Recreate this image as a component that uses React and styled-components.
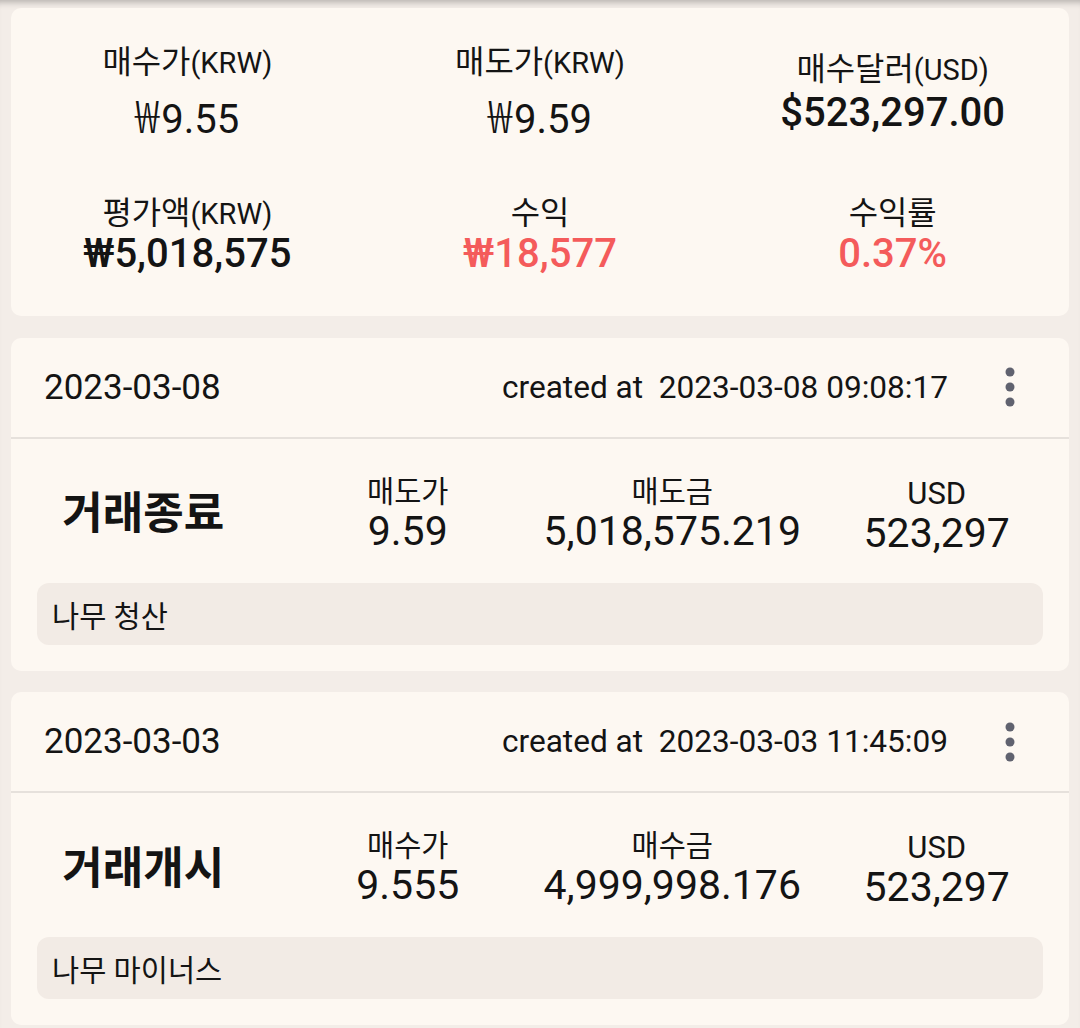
import React from "react";
import styled, { createGlobalStyle } from "styled-components";

const colors = {
    page: "#f3ede8",
    card: "#fdf8f2",
    note: "#f2ebe5",
    line: "#e6e1dc",
    text: "#141414",
    red: "#f45b5b",
    dots: "#60626f",
};

const GlobalStyle = createGlobalStyle`
    html, body {
        margin: 0;
        padding: 0;
        background: ${colors.page};
    }
    body {
        font-family: Roboto, "Noto Sans CJK KR", "Noto Sans", sans-serif;
        color: ${colors.text};
    }
`;

const Page = styled.div`
    width: 1080px;
    min-height: 1028px;
    box-sizing: border-box;
    padding: 8px 11px;
    background: ${colors.page};
    box-shadow: inset 0 8px 7px -6px rgba(0, 0, 0, 0.28);
    display: flex;
    flex-direction: column;
    gap: 21.5px;
`;

const Card = styled.div`
    background: ${colors.card};
    border-radius: 10px;
    overflow: hidden;
`;

/* hangul is drawn a bit larger than latin in the app */
const Ko = styled.span`
    font-size: 1.1em;
`;

const Won = styled.span`
    font-family: "Noto Sans CJK KR", sans-serif;
    font-weight: 300;
    font-size: 1.12em;
    line-height: 1;
    margin-right: 2px;
`;

const SummaryGrid = styled(Card)`
    height: 308px;
    box-sizing: border-box;
    display: grid;
    grid-template-columns: repeat(3, 1fr);
    grid-template-rows: 96px 84px;
    row-gap: 52px;
    padding-top: 36px;
    align-items: center;
`;

const SummaryCell = styled.div`
    display: flex;
    flex-direction: column;
    align-items: center;
    gap: ${(p) => p.$gap}px;
`;

const SummaryLabel = styled.div`
    font-size: 29px;
    line-height: 34px;
    margin-top: 4px;
    white-space: nowrap;
`;

const SummaryValue = styled.div`
    font-size: 40px;
    line-height: 46px;
    font-weight: ${(p) => (p.$strong ? 500 : 400)};
    color: ${(p) => (p.$red ? colors.red : colors.text)};
    white-space: nowrap;
`;

const TradeHeader = styled.div`
    height: 99px;
    display: flex;
    align-items: center;
    padding-left: 33px;
    border-bottom: 2px solid ${colors.line};
`;

const TradeDate = styled.div`
    font-size: 35px;
    flex: 1;
`;

const CreatedAt = styled.div`
    font-size: 31.6px;
    white-space: pre;
`;

const MoreButton = styled.button`
    width: 40px;
    height: 48px;
    margin: 0 39px 0 42px;
    padding: 0;
    border: none;
    background: transparent;
    display: flex;
    align-items: center;
    justify-content: center;
`;

const TradeBody = styled.div`
    display: grid;
    grid-template-columns: repeat(4, 1fr);
    align-items: center;
    padding: 38px 0 31px;
`;

const TradeKind = styled.div`
    text-align: center;
    font-size: 44px;
    font-weight: 700;
    line-height: 44px;
`;

const TradeCell = styled.div`
    display: flex;
    flex-direction: column;
    align-items: center;
    gap: 3px;
    transform: translateY(${(p) => (p.$shift ? 2 : 0)}px);
`;

const TradeLabel = styled.div`
    font-size: ${(p) => (p.$latin ? 31 : 29.5)}px;
    line-height: 30px;
`;

const TradeValue = styled.div`
    font-size: 41px;
    line-height: 42px;
    white-space: nowrap;
`;

const Note = styled.div`
    margin: 0 26px 26px;
    height: 62px;
    border-radius: 12px;
    background: ${colors.note};
    display: flex;
    align-items: center;
    padding-left: 15px;
    font-size: 29.5px;
`;

const summary = [
    { ko: "매수가", unit: "(KRW)", won: true, value: "9.55", gap: 12 },
    { ko: "매도가", unit: "(KRW)", won: true, value: "9.59", gap: 12 },
    { ko: "매수달러", unit: "(USD)", value: "$523,297.00", gap: 3, strong: true },
    { ko: "평가액", unit: "(KRW)", value: "₩5,018,575", gap: 0, strong: true },
    { ko: "수익", unit: "", value: "₩18,577", gap: 0, strong: true, red: true },
    { ko: "수익률", unit: "", value: "0.37%", gap: 0, strong: true, red: true },
];

const trades = [
    {
        date: "2023-03-08",
        created: "2023-03-08 09:08:17",
        kind: "거래종료",
        priceLabel: "매도가",
        price: "9.59",
        amountLabel: "매도금",
        amount: "5,018,575.219",
        usd: "523,297",
        memo: "나무 청산",
    },
    {
        date: "2023-03-03",
        created: "2023-03-03 11:45:09",
        kind: "거래개시",
        priceLabel: "매수가",
        price: "9.555",
        amountLabel: "매수금",
        amount: "4,999,998.176",
        usd: "523,297",
        memo: "나무 마이너스",
    },
];

const DotsIcon = () => (
    <svg width="12" height="40" viewBox="0 0 12 40">
        <circle cx="6" cy="5" r="4.5" fill={colors.dots} />
        <circle cx="6" cy="20" r="4.5" fill={colors.dots} />
        <circle cx="6" cy="35" r="4.5" fill={colors.dots} />
    </svg>
);

const TradeCard = ({ trade }) => (
    <Card>
        <TradeHeader>
            <TradeDate>{trade.date}</TradeDate>
            <CreatedAt>{`created at  ${trade.created}`}</CreatedAt>
            <MoreButton>
                <DotsIcon />
            </MoreButton>
        </TradeHeader>
        <TradeBody>
            <TradeKind>{trade.kind}</TradeKind>
            <TradeCell>
                <TradeLabel>{trade.priceLabel}</TradeLabel>
                <TradeValue>{trade.price}</TradeValue>
            </TradeCell>
            <TradeCell>
                <TradeLabel>{trade.amountLabel}</TradeLabel>
                <TradeValue>{trade.amount}</TradeValue>
            </TradeCell>
            <TradeCell $shift>
                <TradeLabel $latin>USD</TradeLabel>
                <TradeValue>{trade.usd}</TradeValue>
            </TradeCell>
        </TradeBody>
        <Note>{trade.memo}</Note>
    </Card>
);

const App = () => {
    return (
        <>
            <GlobalStyle />
            <Page>
                <SummaryGrid>
                    {summary.map((s) => (
                        <SummaryCell key={s.ko} $gap={s.gap}>
                            <SummaryLabel>
                                <Ko>{s.ko}</Ko>
                                {s.unit}
                            </SummaryLabel>
                            <SummaryValue $strong={s.strong} $red={s.red}>
                                {s.won && <Won>₩</Won>}
                                {s.value}
                            </SummaryValue>
                        </SummaryCell>
                    ))}
                </SummaryGrid>
                {trades.map((t) => (
                    <TradeCard key={t.created} trade={t} />
                ))}
            </Page>
        </>
    );
};

export default App;
